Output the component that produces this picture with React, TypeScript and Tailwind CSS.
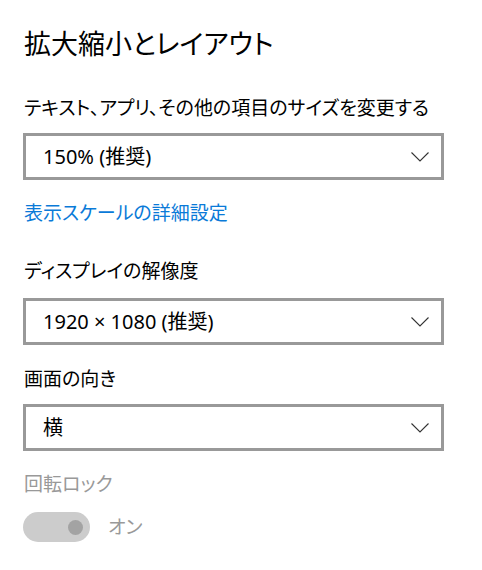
import React from 'react';

const FONT = "font-['Noto_Sans','Noto_Sans_CJK_JP',sans-serif] [font-feature-settings:'palt']";

const Chevron: React.FC = () => (
  <svg width="18" height="10" viewBox="0 0 18 10" fill="none">
    <polyline points="0.5,0.5 9,9 17.5,0.5" stroke="#333" strokeWidth="1.1" />
  </svg>
);

const Dropdown: React.FC<{ value: string; className?: string }> = ({ value, className }) => (
  <div
    className={`flex h-[47px] w-[421px] items-center justify-between border-[3px] border-[#999] bg-white pl-[17px] pr-[12px] ${className ?? ''}`}
  >
    <span className="text-[20px] leading-6 text-black">{value}</span>
    <Chevron />
  </div>
);

const Label: React.FC<{ children: React.ReactNode; className?: string }> = ({ children, className }) => (
  <div className={`h-6 text-[19px] leading-6 text-black ${className ?? ''}`}>{children}</div>
);

export default function App() {
  return (
    <div className={`h-[570px] w-[482px] bg-white pl-[23px] ${FONT}`}>
      <h1 className="pt-6 pl-px text-[27px] font-normal leading-10 text-black">拡大縮小とレイアウト</h1>

      <Label className="mt-8 pl-px">テキスト、アプリ、その他の項目のサイズを変更する</Label>
      <Dropdown value="150% (推奨)" className="mt-[13px]" />

      <div className="mt-[21px] h-6 pl-px text-[19px] leading-6 text-[#0a7ad8]">表示スケールの詳細設定</div>

      <Label className="mt-[34px] pl-px">ディスプレイの解像度</Label>
      <Dropdown value="1920 × 1080 (推奨)" className="mt-[15px]" />

      <Label className="mt-[22px] pl-px">画面の向き</Label>
      <Dropdown value="横" className="mt-[13px]" />

      <div className="mt-[21px] h-6 pl-px text-[19px] leading-6 text-[#999]">回転ロック</div>

      <div className="mt-4 flex items-center">
        <div className="flex h-[30px] w-[67px] items-center justify-end rounded-full bg-[#cccccc] pr-[7px]">
          <div className="h-[15px] w-[15px] rounded-full bg-[#a3a3a3]" />
        </div>
        <span className="ml-[18px] text-[19px] leading-6 text-[#999]">オン</span>
      </div>
    </div>
  );
}
